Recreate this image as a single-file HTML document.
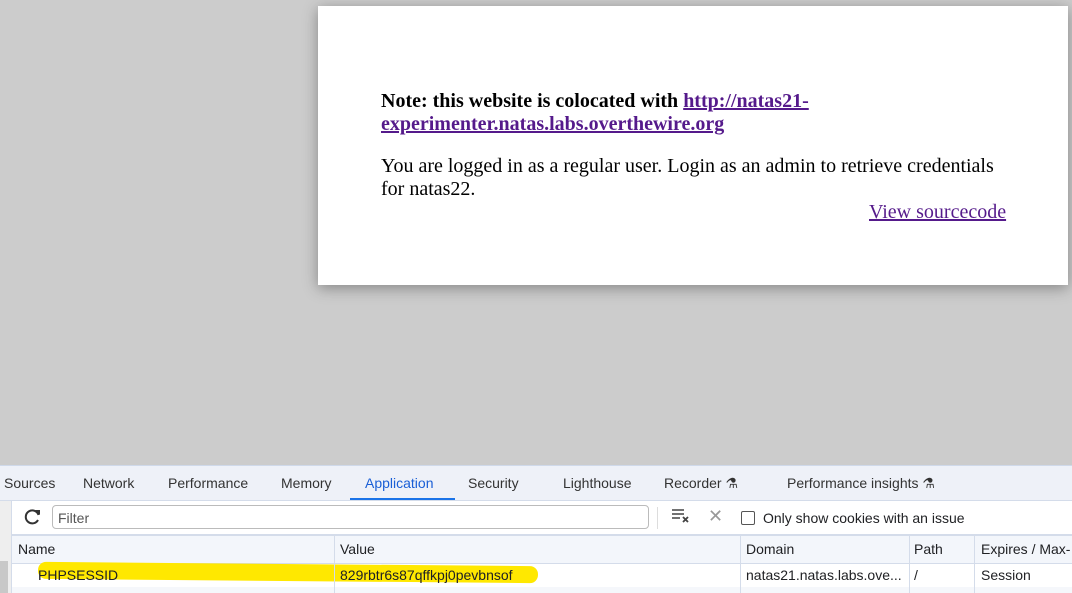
<!DOCTYPE html>
<html><head><style>
body{margin:0;width:1072px;height:592px;overflow:hidden;background:#cccccc;position:relative;font-family:"Liberation Sans",sans-serif}
.card{position:absolute;left:318px;top:6px;width:750px;height:279px;background:#fff;box-shadow:0 3px 14px rgba(0,0,0,.35)}
.s{font-family:"Liberation Serif",serif;font-size:20px;color:#000;position:absolute;line-height:23px}
a{color:#551a8b}
.dt{position:absolute;left:0;top:465px;width:1072px;height:127px;background:#fff;border-top:1px solid #cfd9ea}
.tabs{position:absolute;left:0;top:0;width:1072px;height:34px;background:#eef1f8;border-bottom:1px solid #d4dcea;font-size:14px;color:#333}
.tabs span{position:absolute;top:9px}
.t{position:absolute;font-size:14px;color:#202124;white-space:nowrap}
.v{position:absolute;top:69px;width:1px;height:58px;background:#d4dcea}
</style></head><body>
<div class="card">
<div class="s" style="left:63px;top:84px;width:640px"><b>Note: this website is colocated with <a href="#">http://natas21-<br>experimenter.natas.labs.overthewire.org</a></b></div>
<div class="s" style="left:63px;top:149px;width:620px">You are logged in as a regular user. Login as an admin to retrieve credentials for natas22.</div>
<div class="s" style="left:551px;top:195px"><a href="#">View sourcecode</a></div>
</div>
<div class="dt">
<div class="tabs">
<span style="left:4px">Sources</span><span style="left:83px">Network</span><span style="left:168px">Performance</span><span style="left:281px">Memory</span><span style="left:365px;color:#1a5fd6">Application</span><span style="left:468px">Security</span><span style="left:563px">Lighthouse</span><span style="left:664px">Recorder ⚗</span><span style="left:787px">Performance insights ⚗</span>
<div style="position:absolute;left:350px;top:32px;width:105px;height:2px;background:#1a73e8"></div>
</div>
<div style="position:absolute;left:0;top:35px;width:11px;height:92px;background:#eee"></div>
<div style="position:absolute;left:0;top:95px;width:8px;height:32px;background:#c8c8c8"></div>
<div style="position:absolute;left:11px;top:35px;width:1px;height:92px;background:#d4dcea"></div>
<svg style="position:absolute;left:23px;top:41px" width="20" height="20" viewBox="0 0 20 20"><path d="M15.5 8A6.5 6.5 0 1 0 15 13" fill="none" stroke="#333" stroke-width="2"/><path d="M12 3h5v5z" fill="#333"/></svg>
<div style="position:absolute;left:52px;top:39px;width:595px;height:22px;border:1px solid #bbb;border-radius:4px"></div>
<div class="t" style="left:58px;top:44px;color:#555">Filter</div>
<div style="position:absolute;left:657px;top:41px;width:1px;height:22px;background:#ddd"></div>
<svg style="position:absolute;left:671px;top:42px" width="20" height="16" viewBox="0 0 20 16"><path d="M1 2h12M1 6h12M1 10h8" stroke="#444" stroke-width="1.6"/><path d="M12 9l5 5M17 9l-5 5" stroke="#444" stroke-width="1.8"/></svg>
<div class="t" style="left:708px;top:40px;font-size:18px;color:#999">✕</div>
<div style="position:absolute;left:741px;top:45px;width:12px;height:12px;border:1.5px solid #555;border-radius:2px"></div>
<div class="t" style="left:763px;top:44px">Only show cookies with an issue</div>
<div style="position:absolute;left:12px;top:68px;width:1060px;height:27px;background:#f3f6fb;border-top:2px solid #d4dcea;border-bottom:1px solid #d4dcea"></div>
<div style="position:absolute;left:12px;top:121px;width:1060px;height:6px;background:#f5f7fb"></div>
<div style="position:absolute;left:38px;top:98px;width:500px;height:17px;background:#ffe800;border-radius:8px;transform:rotate(.5deg)"></div>
<div class="v" style="left:334px"></div><div class="v" style="left:740px"></div><div class="v" style="left:909px"></div><div class="v" style="left:974px"></div>
<div class="t" style="left:18px;top:75px">Name</div>
<div class="t" style="left:340px;top:75px">Value</div>
<div class="t" style="left:746px;top:75px">Domain</div>
<div class="t" style="left:914px;top:75px">Path</div>
<div class="t" style="left:981px;top:75px">Expires / Max-</div>
<div class="t" style="left:38px;top:101px">PHPSESSID</div>
<div class="t" style="left:340px;top:101px">829rbtr6s87qffkpj0pevbnsof</div>
<div class="t" style="left:746px;top:101px">natas21.natas.labs.ove...</div>
<div class="t" style="left:914px;top:101px">/</div>
<div class="t" style="left:981px;top:101px">Session</div>
</div>
</body></html>
